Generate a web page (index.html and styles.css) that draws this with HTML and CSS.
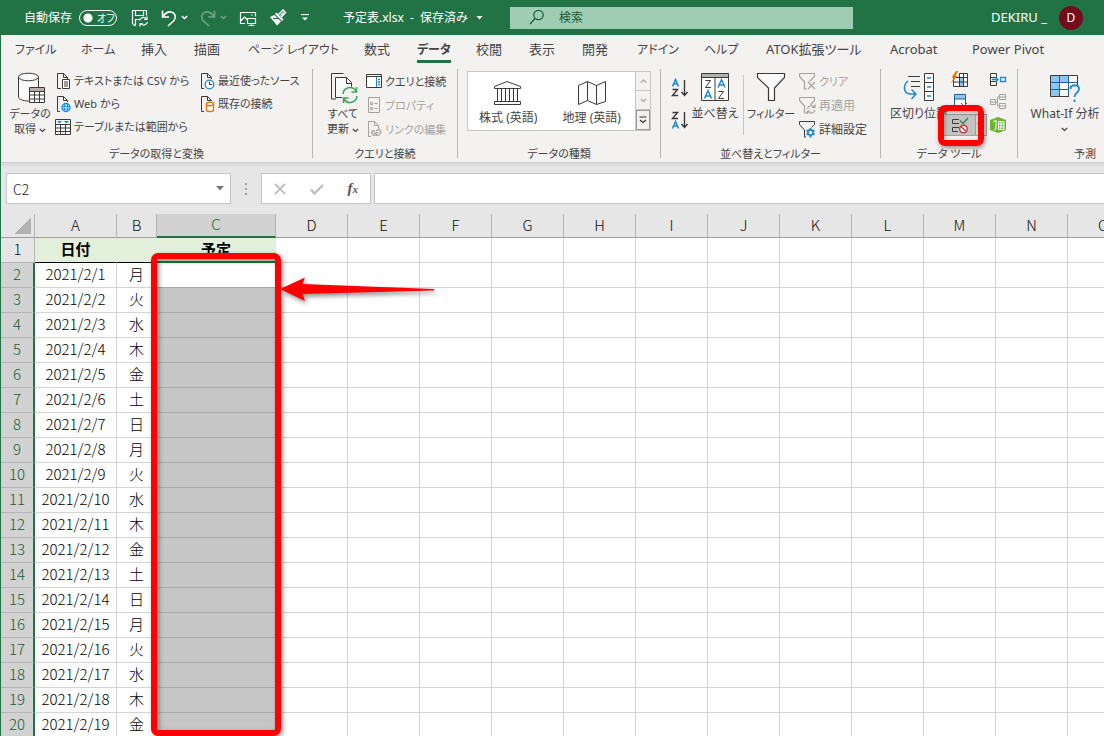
FILE: index.html
```html
<!DOCTYPE html>
<html lang="ja">
<head>
<meta charset="utf-8">
<title>予定表.xlsx</title>
<link rel="stylesheet" href="styles.css">
</head>
<body>
<header class="titlebar">
  <div class="quick">
    <label class="autosave" for="autosave">自動保存</label>
    <span class="toggle"><input type="checkbox" id="autosave" role="switch"><span class="toggle-text">オフ</span></span>
    <button class="qbtn save" aria-label="保存"><svg width="18" height="18" viewBox="0 0 18 18"><path d="M5 16.500H3.500L1.500 14.500V1.500h14v5M4.500 1.500v5h8v-5M4.500 16V10.500h3.500"/><path d="M8.500 11.500a4 4 0 0 1 7-1.500M16 7.500v3h-3M16.500 13a4 4 0 0 1-7 1.500M9 17.500v-3h3"/></svg></button>
    <button class="qbtn undo" aria-label="元に戻す"><svg width="16" height="18" viewBox="0 0 16 18"><path d="M1.500 1.500v6.500h6.500M1.500 8C4 4.500 7 2.500 10 3c5 1 5 6 3 8.500l-6 5.500" stroke-width="1.600"/></svg></button>
    <button class="qbtn chev" aria-label="元に戻す一覧"><svg width="7" height="5" viewBox="0 0 7 5"><path d="M.8 1l2.700 2.500L6.200 1" stroke-width="1.500"/></svg></button>
    <button class="qbtn redo" aria-label="やり直し" disabled><svg width="16" height="18" viewBox="0 0 16 18"><path d="M14.500 1.500v6.500H8M14.500 8C12 4.500 9 2.500 6 3 1 4 1 9 3 11.500L9 17" stroke-width="1.600"/></svg></button>
    <button class="qbtn chev faint" aria-label="やり直し一覧" disabled><svg width="7" height="5" viewBox="0 0 7 5"><path d="M.8 1l2.700 2.500L6.200 1" stroke-width="1.500"/></svg></button>
    <button class="qbtn pic" aria-label="画像"><svg width="18" height="16" viewBox="0 0 18 16"><path d="M6 13.500H1.500v-11h15v4M1.500 11l4-4 3 3M12 5h1.500M8.500 8.500h8v5h-8zM12.500 13.500v2M9.500 15.500h6"/></svg></button>
    <button class="qbtn brush" aria-label="書式のコピー"><svg width="18" height="18" viewBox="0 0 18 18"><path d="M9.500 5.500L14 1l2.500 2.500-4.500 5M11.500 6.500l3-3" stroke-width="1.400"/><path d="M7.500 3.500l7 7-1.500 1.500-7-7z" fill="#fff" stroke="none"/><path d="M1 8l4.500-2 6.500 6.500L8 16.500z" fill="#fff" stroke="none"/><path d="M4 9.500h6" stroke="#217346"/></svg></button>
    <button class="qbtn more" aria-label="ユーザー設定"><svg width="8" height="8" viewBox="0 0 8 8"><path d="M0 .5h8"/><path d="M1 3.500h6L4 6.500z" fill="#fff" stroke="none"/></svg></button>
  </div>
  <button class="doc">予定表.xlsx&nbsp; -&nbsp; 保存済み<svg width="7" height="4" viewBox="0 0 7 4"><path d="M.5 0h6l-3 3.500z" fill="#fff"/></svg></button>
  <label class="search"><svg width="16" height="17" viewBox="0 0 16 17"><circle cx="9.500" cy="6" r="4.700"/><path d="M6 9.500L1 15"/></svg><input type="search" placeholder="検索" aria-label="検索"></label>
  <div class="account"><span>DEKIRU _</span><button class="avatar">D</button></div>
</header>

<div class="window">
<nav class="tabs">
  <button class="kana">ファイル</button><button class="kana">ホーム</button><button>挿入</button><button>描画</button><button class="kana">ページ レイアウト</button><button>数式</button><button class="kana on">データ</button><button>校閲</button><button>表示</button><button>開発</button><button class="kana">アドイン</button><button class="kana">ヘルプ</button><button>ATOK拡張ツール</button><button>Acrobat</button><button>Power Pivot</button>
</nav>

<div class="ribbon">
  <section class="group g-get">
    <div class="tools">
      <button class="big"><svg width="30" height="32" viewBox="0 0 30 32"><g fill="#fafafa" stroke="#3b3a39"><path d="M3.500 5v20c0 2 4 4 10 4s10-2 10-4V5"/><ellipse cx="13.500" cy="5" rx="10" ry="3.800"/></g><path d="M14.500 15.500h15v15h-15z" fill="#fff" stroke="#3b3a39"/><path d="M15 16h14v3H15z" fill="#b3b0ad"/><path d="M14.500 19.500h15M14.500 23h15M14.500 27h15M19.500 19.500v11M24.500 19.500v11" stroke="#3b3a39" fill="none"/></svg><span>データの<br>取得 <svg class="dn" width="7" height="5" viewBox="0 0 7 5"><path d="M.8 1l2.700 2.500L6.200 1"/></svg></span></button>
      <div class="list tight">
        <button><svg width="16" height="18" viewBox="0 0 16 18"><path d="M6 16.500H2.500v-15h6l4 4V7M8.500 1.500v4h4" class="k"/><path d="M7.500 7.500h7v9h-7z" fill="#fff" stroke="#3b3a39"/><path d="M9 10h4M9 12h4M9 14h4" class="k"/></svg>テキストまたは CSV から</button>
        <button><svg width="16" height="18" viewBox="0 0 16 18"><path d="M5 16.500H2.500v-15h6l4 4V7M8.500 1.500v4h4" class="k"/><circle cx="11" cy="12.500" r="4" fill="#fff" stroke="#1e88d2" stroke-width="1.300"/><ellipse cx="11" cy="12.500" rx="1.800" ry="4" fill="none" stroke="#1e88d2"/><path d="M7 11.500h8M7 14h8" stroke="#1e88d2"/></svg>Web から</button>
        <button><svg width="16" height="18" viewBox="0 0 16 18"><path d="M.5 1.500h15v15H.500z" fill="#fff" stroke="#3b3a39"/><path d="M.5 6.500h15M.5 10h15M.5 13.500h15M5.500 6.500v10M10.500 6.500v10" class="k"/><path d="M2 3h5L4.500 5.500zM9 3h5l-2.500 2.500z" fill="#1e88d2"/></svg>テーブルまたは範囲から</button>
      </div>
      <div class="list tight">
        <button><svg width="16" height="18" viewBox="0 0 16 18"><path d="M5 16.500H2.500v-15h6l4 4V7M8.500 1.500v4h4" class="k"/><circle cx="10.500" cy="12.500" r="4.300" fill="#fff" stroke="#1e88d2" stroke-width="1.300"/><path d="M10.500 9.500v3H13" stroke="#3b3a39" fill="none"/></svg>最近使ったソース</button>
        <button><svg width="16" height="18" viewBox="0 0 16 18"><path d="M5 16.500H2.500v-15h6l4 4V6M8.500 1.500v4h4" class="k"/><path d="M7.500 9v6c0 2 7 2 7 0V9" fill="#fff" stroke="#e8740c" stroke-width="1.400"/><ellipse cx="11" cy="9" rx="3.500" ry="1.700" fill="#fff" stroke="#e8740c" stroke-width="1.400"/></svg>既存の接続</button>
      </div>
    </div>
    <h2>データの取得と変換</h2>
  </section>

  <section class="group g-query">
    <div class="tools">
      <button class="big"><svg width="30" height="32" viewBox="0 0 30 32"><path d="M8 27H3.500V1.500h12" class="k"/><path d="M7.500 5.500h11l5 5v15h-16z" fill="#fafafa" stroke="#3b3a39"/><path d="M18.500 5.500v6h5" class="k"/><circle cx="22" cy="23" r="8.500" fill="#f3f2f1"/><g fill="none" stroke="#3da35a" stroke-width="1.500"><path d="M15 22a7 7 0 0 1 13-3M28.500 15v5h-5M29 24a7 7 0 0 1-13 3M15.500 31v-5h5"/></g></svg><span>すべて<br>更新 <svg class="dn" width="7" height="5" viewBox="0 0 7 5"><path d="M.8 1l2.700 2.500L6.200 1"/></svg></span></button>
      <div class="list">
        <button><svg width="16" height="16" viewBox="0 0 16 16"><path d="M.5 1.500h15v13H.500z" fill="#fff" stroke="#3b3a39"/><path d="M.5 3.500h15" class="k"/><path d="M10.500 4v10" stroke="#1e88d2"/><path d="M12 6.500h2M12 9h2M12 11.500h2" stroke="#1e88d2" stroke-width="1.400"/></svg>クエリと接続</button>
        <button disabled><svg width="16" height="16" viewBox="0 0 16 16"><g fill="none" stroke="#a5a3a1"><path d="M2.500.5h11v15h-11z"/><path d="M4.500 5.500h2v2h-2zM4.500 10.500h2v2h-2zM8.500 6.500h3M8.500 11.500h3"/></g></svg>プロパティ</button>
        <button disabled><svg width="16" height="16" viewBox="0 0 16 16"><g fill="none" stroke="#a5a3a1"><path d="M5 15.500H2.500V.5h6l4 4V7M8.500.5v4h4"/><path d="M9 10.500L7 9.500 5.500 11.500l2 3 3-1M10 10l3-2 2 3-2 3-3 .5M8 12.500l4-1" stroke-width="1.300"/></g></svg>リンクの編集</button>
      </div>
    </div>
    <h2>クエリと接続</h2>
  </section>

  <section class="group g-types">
    <div class="tools">
      <div class="gallery">
        <button class="tile"><svg width="28" height="26" viewBox="0 0 28 26"><path d="M.5 8.500v-2L13 1.500l13.500 5v2z" fill="#fafafa" stroke="#3b3a39"/><path d="M3.500 8.500h20v13h-20z" fill="#fafafa" stroke="#3b3a39"/><path d="M7.500 9v12M11.500 9v12M15.500 9v12M19.500 9v12M.5 24.500v-3h26v3z" class="k"/></svg>株式 (英語)</button>
        <button class="tile"><svg width="28" height="26" viewBox="0 0 28 26"><path d="M.5 5.500l9-4 9 4 9-4v20l-9 3-9-4-9 4z" fill="#fafafa" stroke="#3b3a39"/><path d="M9.500 1.500v19M18.500 5.500v19" class="k"/></svg>地理 (英語)</button>
        <div class="scroller">
          <button aria-label="上へ" disabled><svg width="7" height="5" viewBox="0 0 7 5"><path d="M.8 3.500L3.500 1l2.700 2.500"/></svg></button>
          <button aria-label="下へ" disabled><svg width="7" height="5" viewBox="0 0 7 5"><path d="M.8 1l2.700 2.500L6.200 1"/></svg></button>
          <button aria-label="その他" class="all"><svg width="8" height="8" viewBox="0 0 8 8"><path d="M.5 1h7M1 4l3 2.500L7 4"/></svg></button>
        </div>
      </div>
    </div>
    <h2>データの種類</h2>
  </section>

  <section class="group g-sort">
    <div class="tools">
      <div class="sorts">
        <button aria-label="昇順"><svg width="18" height="20" viewBox="0 0 18 20"><path d="M1.500 8.500L4.500 1.500l3 7M2.500 6h4" stroke="#1e88d2" stroke-width="1.500" fill="none"/><path d="M1.500 11.500h5l-5 6H7M13.500 2v15M10.500 14l3 3.500 3-3.500" class="k" stroke-width="1.400"/></svg></button>
        <button aria-label="降順"><svg width="18" height="20" viewBox="0 0 18 20"><path d="M1.500 18.500l3-7 3 7M2.500 16h4" stroke="#1e88d2" stroke-width="1.500" fill="none"/><path d="M1.500 2.500h5l-5 6H7M13.500 2v15M10.500 14l3 3.500 3-3.500" class="k" stroke-width="1.400"/></svg></button>
      </div>
      <button class="big"><svg width="30" height="32" viewBox="0 0 30 32"><path d="M1.500 1.500h27v27h-27z" fill="#fff" stroke="#3b3a39"/><path d="M2 2h26v3H2z" fill="#b3b0ad"/><path d="M1.500 5.500h27M15 5.500v23M5.500 8.500h5l-5 7h5.500M18.500 19.500h5l-5 7H24" class="k"/><path d="M4.500 26.500l3.500-8 3.500 8M5.500 24h5M18 15.500l3.500-8 3.500 8M19 13h5" stroke="#1e88d2" stroke-width="1.500" fill="none"/></svg><span>並べ替え</span></button>
      <div class="rule"></div>
      <button class="big filter"><svg width="30" height="32" viewBox="0 0 30 32"><path d="M1.500 1.500h27v4L18.500 16v12.500h-6V16L1.500 5.500z" fill="#fafafa" stroke="#3b3a39" stroke-width="1.200"/></svg><span>フィルター</span></button>
      <div class="list">
        <button disabled class="kana"><svg width="17" height="17" viewBox="0 0 17 17"><path d="M.5.5h15v3l-5 5M.5.5v3l5 5.500v7H8M9 9l7 7M16 9l-7 7" stroke="#a5a3a1" stroke-width="1.200" fill="none"/></svg>クリア</button>
        <button disabled><svg width="17" height="17" viewBox="0 0 17 17"><path d="M.5.5h15v3l-4 4M.5.5v3l5 5.500v7H8M8.500 12a4 4 0 0 1 7-2M16 7.500v3h-3M16 13a4 4 0 0 1-7 1.500M8.500 17v-3h3" stroke="#a5a3a1" stroke-width="1.200" fill="none"/></svg>再適用</button>
        <button><svg width="17" height="17" viewBox="0 0 17 17"><path d="M.5.5h15v3l-3 3M.5.5v3l5 5.500v7H7" class="k"/><circle cx="11.500" cy="11.500" r="2.600" fill="none" stroke="#1e88d2" stroke-width="1.600"/><path d="M11.500 7v2M11.500 14v2.500M7.500 9.300l2 1M13.500 12.700l2 1M7.500 13.700l2-1M13.500 10.300l2-1" stroke="#1e88d2" stroke-width="2"/></svg>詳細設定</button>
      </div>
    </div>
    <h2>並べ替えとフィルター</h2>
  </section>

  <section class="group g-tools">
    <div class="tools">
      <button class="big"><svg width="32" height="32" viewBox="0 0 32 32"><path d="M5 4.500h12M8 9.500h9M8 14.500h9" class="k"/><path d="M5 9c-5 4-5 12 2 13h5M8.500 17.500l4.500 4.500-4.500 5" stroke="#1e88d2" stroke-width="1.500" fill="none"/><path d="M21.500 1.500h9v27h-9zM21.500 10.500h9M21.500 19.500h9" fill="#fff" stroke="#3b3a39"/><path d="M24 6h4M24 15h4M24 24h4" stroke="#1e88d2" stroke-width="1.300"/></svg><span>区切り位置</span></button>
      <div class="minis">
        <button aria-label="フラッシュ フィル"><svg width="18" height="18" viewBox="0 0 18 18"><path d="M2.500 6.500h14v9h-14zM8.500 2.500h8v4h-8z" fill="#fff" stroke="#3b3a39"/><path d="M9 7h3.500v8H9z" fill="#8ec5ee"/><path d="M2.500 11h14M8.500 2.500v13M12.500 2.500v13" stroke="#3b3a39"/><path d="M5 0L.5 6.500H3L0 12l7-7H4.500L7 0z" fill="#e8740c"/></svg></button>
        <button aria-label="統合"><svg width="18" height="18" viewBox="0 0 18 18"><path d="M1.500 6.500v-4h6v4zM1.500 14.500v-4h6v4zM1.500 6v5" class="k"/><path d="M11.500 6.500h5v4h-5z" fill="#fff" stroke="#1e88d2" stroke-width="1.300"/><path d="M3 8.500h6M6.500 6L9 8.500 6.500 11" stroke="#1e88d2" fill="none" stroke-width="1.300"/></svg></button>
        <button aria-label="重複の削除"><svg width="18" height="18" viewBox="0 0 18 18"><path d="M3.500 1.500h11v11h-11z" fill="#fff" stroke="#1e5f9e"/><path d="M4 2h10v4H4z" fill="#8ec5ee"/><path d="M3.500 6h11" stroke="#1e5f9e"/><path d="M10 10l6 6M16 10l-6 6" stroke="#d13438"/></svg></button>
        <button aria-label="リレーションシップ" disabled><svg width="18" height="18" viewBox="0 0 18 18"><path d="M1.500 6.500h5v5h-5zM10.500 1.500h6v5h-6zM10.500 10.500h6v5h-6zM10.500 4h6M10.500 13h6M1.500 9h5M6.500 9H8.500V4h2M8.500 9v4h2" stroke="#a5a3a1" fill="none"/></svg></button>
        <div class="split">
          <button aria-label="データの入力規則" class="main"><svg width="18" height="18" viewBox="0 0 18 18"><path d="M8 3.500H1.500v4H8M8 11.500H1.500v4H7" class="k"/><path d="M9 4.500l3 3 5-5.500" stroke="#2e8b57" fill="none" stroke-width="1.500"/><circle cx="12.500" cy="13" r="3.800" fill="#fff" stroke="#d13438" stroke-width="1.400"/><path d="M10 10.500l5 5" stroke="#d13438" stroke-width="1.400"/></svg></button><button aria-label="データの入力規則メニュー" class="arrow"><svg width="5" height="4" viewBox="0 0 5 4"><path d="M0 0h5L2.500 3z" fill="#3b3a39"/></svg></button>
        </div>
        <button aria-label="データ モデル"><svg width="18" height="18" viewBox="0 0 18 18"><path d="M1 4l8-3 8 3v10l-8 3-8-3z" fill="#6bb52d"/><path d="M4 6l3-2v9l-2 1M9.500 5.500h5.500v8H9.500zM9.500 8h5.500M9.500 11h5.500M12 5.500v8" stroke="#fff" fill="none"/></svg></button>
      </div>
    </div>
    <h2>データ ツール</h2>
  </section>

  <section class="group g-forecast">
    <div class="tools">
      <button class="big"><svg width="32" height="32" viewBox="0 0 32 32"><path d="M1.500 3.500h27v21h-27z" fill="#fff" stroke="#3b3a39"/><path d="M2 4h8v20H2zM10 4h9v6h-9z" fill="#8ec5ee"/><path d="M1.500 10.500h27M1.500 17.500h27M10.500 3.500v21M19.500 3.500v21" stroke="#1e5f9e" fill="none"/><path d="M20 13h12v18H20z" fill="#f3f2f1"/><path d="M21.500 17c0-5 8.500-5 8.500 0 0 4-4.500 3.500-4.500 8M25.500 27.500v2.500" stroke="#1e88d2" stroke-width="1.800" fill="none"/></svg><span>What-If 分析<br><svg class="dn" width="7" height="5" viewBox="0 0 7 5"><path d="M.8 1l2.700 2.500L6.200 1"/></svg></span></button>
    </div>
    <h2>予測</h2>
  </section>
</div>

<div class="formula">
  <div class="namebox"><input type="text" value="C2" aria-label="名前ボックス"><button aria-label="名前一覧"><svg width="8" height="5" viewBox="0 0 8 5"><path d="M0 0h8L4 4.500z" fill="#777"/></svg></button></div>
  <svg class="grip" width="4" height="12" viewBox="0 0 4 12"><path d="M1 0h2v2H1zM1 5h2v2H1zM1 10h2v2H1z" fill="#a0a0a0"/></svg>
  <div class="fx">
    <button aria-label="キャンセル"><svg width="14" height="14" viewBox="0 0 14 14"><path d="M2 2l10 10M12 2L2 12" stroke="#bdbdbd" stroke-width="1.800"/></svg></button>
    <button aria-label="入力"><svg width="14" height="14" viewBox="0 0 14 14"><path d="M1 7.500l3.500 4L13 3" stroke="#bdbdbd" stroke-width="2.400" fill="none"/></svg></button>
    <button aria-label="関数の挿入" class="fn"><i>f</i><sub>x</sub></button>
  </div>
  <input class="expr" type="text" aria-label="数式バー">
</div>

<main class="sheet">
  <table>
    <colgroup id="cols"></colgroup>
    <thead><tr id="letters"></tr></thead>
    <tbody id="rows"></tbody>
  </table>
  <div class="frame"></div>
  <svg class="pointer" width="160" height="30" viewBox="0 0 160 30"><path d="M0 14L25 2.500 22.500 9 154 14v1.500L22.500 19 25 26z" fill="#f00"/></svg>
</main>
</div>
<script src="sheet.js"></script>
</body>
</html>
```
FILE: styles.css
```css
*, ::before, ::after { box-sizing: border-box; }
body {
  margin: 0;
  height: 100vh;
  display: flex;
  flex-direction: column;
  overflow: hidden;
  background: #fff;
  color: #444;
  font: 12px/15px "Noto Sans", "Noto Sans CJK JP", sans-serif;
  font-feature-settings: "palt";
}
button, input {
  font: inherit;
  font-feature-settings: inherit;
  color: inherit;
  background: none;
  border: 0;
  padding: 0;
  margin: 0;
  outline: 0;
}
button { white-space: nowrap; }
svg { display: block; flex: none; }
.k { fill: none; stroke: #3b3a39; }

/* title bar */
.titlebar {
  flex: none;
  height: 35px;
  display: flex;
  align-items: center;
  background: #217346;
  color: #fff;
}
.quick { flex: 0 0 343px; display: flex; align-items: center; padding-left: 24px; }
.autosave { width: 55px; }
.toggle { display: flex; position: relative; width: 38px; margin-right: 14px; }
.toggle input {
  appearance: none;
  width: 38px;
  height: 16px;
  border: 1px solid #fff;
  border-radius: 8px;
  background: radial-gradient(circle at 8px 7px, #fff 4px, transparent 5px);
}
.toggle-text { position: absolute; left: 18px; top: 1px; font-size: 10px; line-height: 14px; pointer-events: none; }
.qbtn svg { fill: none; stroke: #fff; stroke-width: 1.2; }
.undo { margin-left: 12px; }
.chev { margin-left: 4px; }
.redo { margin-left: 12px; }
.redo, .faint { opacity: .35; }
.pic { margin-left: 12px; }
.brush { margin-left: 12px; }
.more { margin-left: 14px; }
.doc { display: flex; align-items: center; gap: 8px; flex: 0 0 167px; }
.search {
  flex: 0 1 343px;
  height: 22px;
  display: flex;
  align-items: center;
  gap: 14px;
  padding-left: 19px;
  background: #9fcdb3;
}
.search svg { fill: none; stroke: #185c37; stroke-width: 1.2; }
.search input { flex: 1; min-width: 0; }
.search input::placeholder { color: #185c37; opacity: 1; }
.account { margin-left: auto; padding-right: 21px; display: flex; align-items: center; gap: 12px; font-size: 13px; }
.avatar { width: 24px; height: 24px; border-radius: 50%; background: #750b1c; color: #fff; font-size: 12px; }

/* tabs */
.window { flex: 1; min-height: 0; display: flex; flex-direction: column; border-left: 1px solid #217346; }
.tabs {
  flex: none;
  display: grid;
  grid-template-columns: 66px 60px 53px 54px 116px 53px 59px 53px 53px 55px 67px 62px 124px 82px auto;
  justify-content: start;
  justify-items: start;
  height: 29px;
  padding-left: 14px;
  background: #f3f2f1;
  font-size: 13px;
}
.tabs button { height: 28px; padding-top: 4px; border-bottom: 3px solid transparent; }
.tabs .kana { font-size: 12px; }
.tabs .on { border-color: #217346; font-weight: 700; }

/* ribbon */
.ribbon {
  flex: none;
  display: grid;
  grid-template-columns: 312px 145px 203px 220px 137px minmax(134px, 1fr);
  padding: 5px 0 4px;
  background: #f3f2f1;
  border-bottom: 1px solid #d0cecc;
}
.group { display: flex; flex-direction: column; border-right: 1px solid #b8b6b4; }
.group h2 { margin: 0; padding-top: 2px; height: 13px; font: inherit; font-size: 11px; text-align: center; line-height: 13px; }
.tools { display: flex; height: 76px; }
.big { flex: none; display: flex; flex-direction: column; align-items: center; padding-top: 3px; gap: 2px; height: 72px; }
.big span { text-align: center; line-height: 15px; }
.dn { display: inline-block; vertical-align: middle; fill: none; stroke: #444; stroke-width: 1.2; }
.list { flex: none; display: flex; flex-direction: column; }
.list button { display: flex; align-items: center; gap: 3px; height: 24px; }
.list.tight button { height: 23px; }
.g-get .tools, .g-query .tools, .g-sort .filter, .g-sort .kana { font-size: 11px; }
button:disabled { color: #a5a3a1; }
.g-get .tools { padding-left: 8px; }
.g-get .big { width: 42px; margin-right: 4px; }
.g-get .list { width: 144px; }
.g-get .list:last-child { width: auto; }
.g-query .tools { padding-left: 9px; }
.g-query .big { width: 42px; margin-right: 2px; }
.g-types .tools { padding: 2px 9px 0; }
.gallery { flex: 1; display: flex; height: 60px; background: #fff; border: 1px solid #c8c6c4; }
.tile { flex: 1; display: flex; flex-direction: column; align-items: center; gap: 4px; padding: 8px 3px 0 0; }
.scroller { width: 15px; display: flex; flex-direction: column; border-left: 1px solid #c8c6c4; }
.scroller button { flex: 1; display: grid; place-items: center; border-bottom: 1px solid #c8c6c4; background: #f3f2f1; }
.scroller svg { fill: none; stroke: #a5a3a1; stroke-width: 1.2; }
.scroller .all { border: 1px solid #999; }
.scroller .all svg { stroke: #333; }
.g-sort .tools { padding-left: 10px; }
.sorts { display: flex; flex-direction: column; gap: 12px; padding-top: 9px; }
.g-sort .big { width: 50px; }
.sorts + .big { margin-left: 1px; }
.rule { width: 1px; height: 60px; margin: 6px 2px 0 3px; background: #c8c6c4; }
.g-sort .filter { margin-right: 3px; }
.g-tools .tools { padding-left: 8px; }
.g-tools .big { width: 60px; }
.minis {
  display: grid;
  grid-template-columns: 38px 20px;
  grid-template-rows: 22px 22px 24px;
  align-items: center;
  padding-left: 2px;
}
.minis > button { justify-self: start; }
.split {
  position: relative;
  width: 44px;
  height: 22px;
  margin-left: -8px;
  display: flex;
  align-items: center;
  background: #c5c3c1;
  border: 1px solid #a5a3a1;
}
.split .main { padding: 1px 6px 1px 7px; border-right: 1px solid #a5a3a1; height: 20px; }
.split .arrow { flex: 1; padding-right: 4px; display: grid; place-items: center; height: 20px; background: #e1dfdd; }
.split::after {
  content: "";
  position: absolute;
  left: -6px;
  top: -10px;
  width: 46px;
  height: 41px;
  border: 6px solid #f00;
  border-radius: 7px;
  box-shadow: 1px 2px 4px rgba(0, 0, 0, .4), inset 1px 2px 4px rgba(0, 0, 0, .3);
}
.g-forecast { border: 0; }
.g-forecast .big { margin-left: 8px; width: 78px; }

/* formula bar */
.formula {
  flex: none;
  display: flex;
  align-items: center;
  height: 51px;
  padding: 0 0 0 5px;
  background: linear-gradient(#d9d9d9, #e6e6e6 5px);
}
.namebox, .fx, .expr { height: 31px; background: #fff; border: 1px solid #c6c6c6; }
.namebox { flex: 0 0 225px; display: flex; align-items: center; padding: 0 6px; font: 300 14px "Noto Sans CJK JP", sans-serif; }
.namebox input { flex: 1; min-width: 0; height: 100%; color: #222; }
.grip { margin: 0 13px 0 13px; }
.fx { flex: 0 0 110px; display: flex; align-items: center; justify-content: space-between; padding: 0 12px 0 11px; }
.fn { color: #555; font: bold 15px/18px "Liberation Serif", serif; }
.fn sub { font-size: 11px; font-style: italic; vertical-align: baseline; }
.expr { flex: 1; min-width: 0; margin-left: 3px; border-right: 0; }

/* worksheet */
.sheet { position: relative; flex: 1; min-height: 0; overflow: hidden; }
table {
  width: 1139px;
  table-layout: fixed;
  border-collapse: separate;
  border-spacing: 0;
  color: #000;
  font: 300 15px/20px "Noto Sans CJK JP", sans-serif;
}
.c-head { width: 34px; }
.c-a { width: 82px; }
.c-b { width: 40px; }
.c-c { width: 119px; }
.c-n { width: 72px; }
th, td { height: 25px; padding: 0 0 2px; text-align: center; overflow: hidden; white-space: nowrap; }
td { border-right: 1px solid #d4d4d4; border-bottom: 1px solid #d4d4d4; }
th { font-weight: 300; color: #111; background: #e6e6e6; border-right: 1px solid #b5b5b5; border-bottom: 1px solid #b5b5b5; }
thead th { height: 24px; border-bottom-color: #9f9f9f; }
thead .corner { background: linear-gradient(135deg, transparent 50%, #b2b2b2 50%) no-repeat 14px 4px / 16px 16px #e6e6e6; }
thead .picked { background: #d2d2d2; color: #185c37; border-bottom: 2px solid #217346; }
tbody .picked { background: #d2d2d2; color: #185c37; border-right: 2px solid #217346; }
.title { font-weight: 700; background: #e2efda; border-right-color: #e2efda; border-bottom-color: #000; }
.title.last { border-bottom: 2px solid #217346; }
.sel { background: #c6c6c6; border-bottom-color: #a8a8a8; }
.active { background: #fff; border-bottom-color: #a8a8a8; }

/* callouts */
.frame {
  position: absolute;
  left: 150px;
  top: 39px;
  bottom: 0;
  width: 130px;
  border: 6px solid #f00;
  border-radius: 7px;
  box-shadow: 2px 2px 5px rgba(0, 0, 0, .4), inset 2px 2px 5px rgba(0, 0, 0, .4);
}
.pointer { position: absolute; left: 279px; top: 61px; filter: drop-shadow(2px 3px 2px rgba(0, 0, 0, .4)); }
```
FILE: sheet.js
```js
const letters = 'ABCDEFGHIJKLMNO'.split('');
const days = '月火水木金土日';
const classes = { A: 'c-a', B: 'c-b', C: 'c-c' };

document.getElementById('cols').innerHTML =
  '<col class="c-head">' + letters.map(l => `<col class="${classes[l] || 'c-n'}">`).join('');

document.getElementById('letters').innerHTML =
  '<th class="corner"></th>' +
  letters.map(l => `<th scope="col"${l === 'C' ? ' class="picked"' : ''}>${l}</th>`).join('');

function cell(letter, row) {
  if (row === 1) {
    const text = { A: '日付', B: '', C: '予定' }[letter];
    if (text === undefined) return '<td></td>';
    return `<td class="title${letter === 'C' ? ' last' : ''}">${text}</td>`;
  }
  if (letter === 'A') return `<td>2021/2/${row - 1}</td>`;
  if (letter === 'B') return `<td>${days[(row - 2) % 7]}</td>`;
  if (letter === 'C') return `<td class="${row === 2 ? 'active' : 'sel'}"></td>`;
  return '<td></td>';
}

let html = '';
for (let row = 1; row <= 20; row++) {
  html += `<tr><th scope="row"${row > 1 ? ' class="picked"' : ''}>${row}</th>` +
    letters.map(l => cell(l, row)).join('') + '</tr>';
}
document.getElementById('rows').innerHTML = html;
```
